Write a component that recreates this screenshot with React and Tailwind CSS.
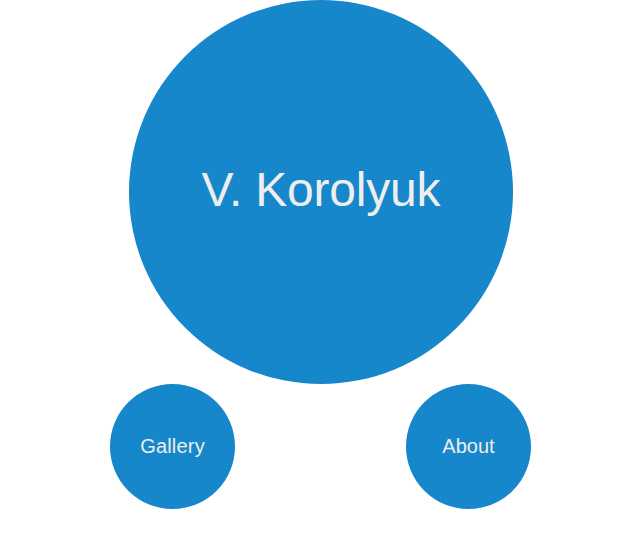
export default function App() {
  return (
    <div className="w-[635px] h-[555px] bg-white font-['Liberation_Sans',Arial,sans-serif] text-[#eeeeee]">
      <div className="ml-[129px] flex h-[384px] w-[384px] items-center justify-center rounded-full bg-[#1687cb]">
        <span className="mb-[5px] text-[48px] leading-none tracking-[-0.2px]">V. Korolyuk</span>
      </div>
      <div className="ml-[110px] flex gap-[171px]">
        <div className="flex h-[125px] w-[125px] items-center justify-center rounded-full bg-[#1687cb]">
          <span className="mb-[2px] text-[20px] leading-none tracking-[0.2px]">Gallery</span>
        </div>
        <div className="flex h-[125px] w-[125px] items-center justify-center rounded-full bg-[#1687cb]">
          <span className="mb-[2px] text-[20px] leading-none">About</span>
        </div>
      </div>
    </div>
  );
}
